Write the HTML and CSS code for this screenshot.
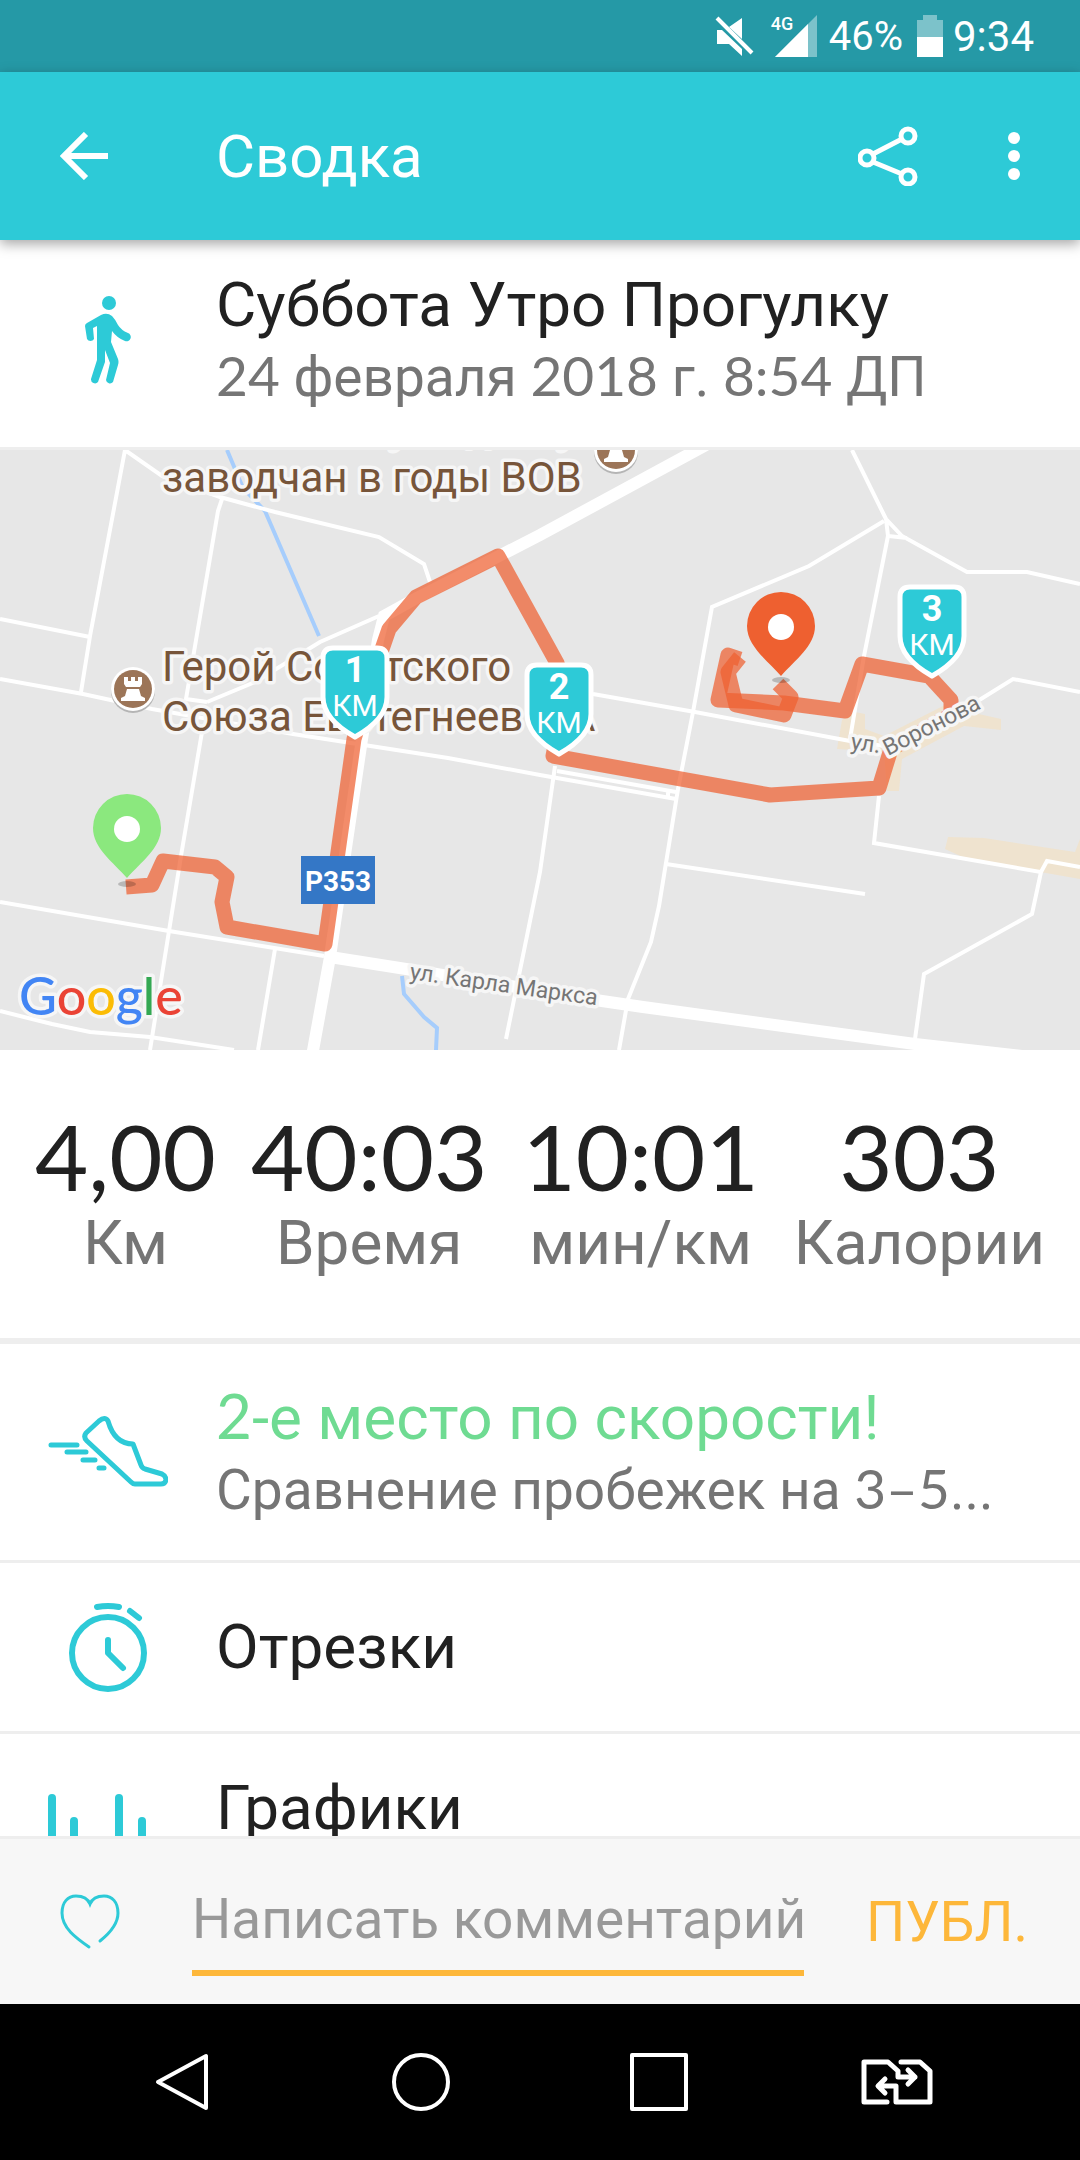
FILE: index.html
```html
<!DOCTYPE html>
<html lang="ru">
<head>
    <meta charset="UTF-8">
    <meta name="viewport" content="width=device-width, initial-scale=1.0">
    <title>Сводка</title>
    <link rel="stylesheet" href="styles.css">
</head>
<body>
    <!-- Системная строка -->
    <div class="status">
        <svg width="40" height="40" viewBox="0 0 40 40">
            <path d="M27 2v21L14 11zM2 14h5l20 19v7L14 28H2z" fill="#fff"/>
            <path d="M2 2l35 35" stroke="#fff" stroke-width="4"/>
        </svg>
        <div class="signal">
            <span>4G</span>
            <svg width="42" height="42" viewBox="0 0 42 42">
                <path d="M42 0v42H0z" fill="#7cc2ca"/>
                <path d="M33 9v33H0z" fill="#fff"/>
            </svg>
        </div>
        <span class="percent">46%</span>
        <svg width="26" height="42" viewBox="0 0 26 42">
            <path d="M6 0h14v5h6v17H0V5h6z" fill="#7cc2ca"/>
            <path d="M0 22h26v20H0z" fill="#fff"/>
        </svg>
        <span class="time">9:34</span>
    </div>

    <header class="appbar">
        <button class="back" aria-label="Назад">
            <svg width="48" height="48" viewBox="0 0 48 48" fill="none" stroke="#fff" stroke-width="6">
                <path d="M48 24H5M26 2L4 24l22 22"/>
            </svg>
        </button>
        <h1>Сводка</h1>
        <button aria-label="Поделиться">
            <svg width="60" height="60" viewBox="0 0 60 60" fill="none" stroke="#fff" stroke-width="5">
                <circle cx="9" cy="32" r="7"/>
                <circle cx="50" cy="10" r="7"/>
                <circle cx="50" cy="51" r="7"/>
                <path d="M15 28l29-15M15 36l29 12"/>
            </svg>
        </button>
        <button aria-label="Ещё">
            <svg width="12" height="60" viewBox="0 0 12 60" fill="#fff">
                <circle cx="6" cy="12" r="6"/>
                <circle cx="6" cy="30" r="6"/>
                <circle cx="6" cy="48" r="6"/>
            </svg>
        </button>
    </header>

    <main>
        <section class="row activity">
            <div class="icon">
                <svg width="46" height="90" viewBox="0 0 46 90" fill="#2dcad7">
                    <circle cx="24" cy="7" r="7"/>
                    <path d="M16 19Q22 16 27 20Q30 23 33 29Q36 34 43 37A4 4 0 0 1 40 45Q32 42 27 35L26 46L33 63Q34 66 33 69L28 86A4 4 0 0 1 21 84L25 67L20 54V66L13 86A4 4 0 0 1 6 83L12 64V30L8 32L9 43A4 4 0 0 1 2 43L0 30Q0 28 2 27Z"/>
                </svg>
            </div>
            <div class="text">
                <h2>Суббота Утро Прогулку</h2>
                <p><span class="num">24</span> февраля <span class="num">2018</span> г. <span class="num">8:54</span> ДП</p>
            </div>
        </section>

        <!-- Карта маршрута -->
        <svg class="map" viewBox="0 0 1080 600" preserveAspectRatio="xMidYMid slice" role="img" aria-label="Карта">
            <defs>
                <g id="shield">
                    <path d="M-22-92H22Q32-92 32-82V-43Q32-21 0-3Q-32-21-32-43V-82Q-32-92-22-92Z" fill="#2dcad7" stroke="#fff" stroke-width="5"/>
                </g>
                <g id="drop">
                    <path d="M0 0C-14-16-34-30-34-50A33 33 0 0 1 34-50C34-30 14-16 0 0Z"/>
                    <circle cy="-49" r="13" fill="#fff"/>
                </g>
                <g id="tower">
                    <circle cy="2" r="22" fill="#b5b5b5"/>
                    <circle r="22" fill="#fff"/>
                    <circle r="19" fill="#9c7558"/>
                    <path d="M-9-12h4v4h3v-4h4v4h3v-4h4v7l-2 3H-7l-2-3zM-6 0H6L8 7l4 2v3H-12V9l4-2z" fill="#fff"/>
                </g>
            </defs>

            <rect width="1080" height="600" fill="#e7e7e7"/>
            <g fill="#efe3cf">
                <path d="M948 387L984 388L1075 402L1080 389V429L967 409L945 399Z"/>
                <path d="M855 262L865 264V279L884 286L943 256L1001 269V280L964 276L902 309L899 341H887L884 302L837 299L842 270Z"/>
            </g>
            <g class="river">
                <path d="M227 0L243 38L265 61L319 186"/>
                <path d="M402 526L404 544L424 567L437 578L436 600"/>
            </g>
            <g class="street">
                <path d="M81 242L90 186L125 0L162 26L220 47L275 62L379 87L424 114L430 132"/>
                <path d="M222 49L218 61L186 249L207 252"/>
                <path d="M203 276L181 406L169 481L150 600"/>
                <path d="M0 169L90 187M0 229L83 244L152 259L293 284L448 308L540 325L676 349"/>
                <path d="M207 252L255 232L320 192L379 166"/>
                <path d="M0 452L169 481L324 506M0 561L52 574L90 582L150 587L234 600"/>
                <path d="M275 499L258 600M555 316L540 422L506 589"/>
                <path d="M884 71L809 116L712 157L693 262L678 339L659 456L651 492L628 549L619 600"/>
                <path d="M852 0L886 69L902 86L967 122H1027L1080 134M886 69L888 86L907 88"/>
                <path d="M888 86L864 206L850 289M593 244L695 262L850 291L884 296"/>
                <path d="M960 260L981 249L1013 229L1080 242"/>
                <path d="M557 321L676 342M668 340V348M666 414L865 444"/>
                <path d="M879 346L874 393L1041 422L1032 464L924 524L915 589M1041 422L1047 411L1080 417"/>
            </g>
            <g class="street main">
                <path d="M706-5L540 85L499 106L413 150L384 166L378 190L362 289L330 507L312 606"/>
                <path d="M330 507L406 519L602 551L643 557L915 594L1022 606"/>
            </g>
            <g class="route">
                <path d="M126 437L152 435L163 411L215 417L227 427L222 452L227 477L325 494L354 289L380 205L389 179L416 147L498 106L557 213L566 240L553 306L770 345L879 338L891 299L951 265V250L929 226L862 214L845 261L784 253L718 250L728 205L740 209"/>
                <path d="M740 207L728 222L736 255L784 265L791 247L778 234"/>
            </g>

            <g class="place">
                <text x="389" y="-9">у</text>
                <text x="466" y="-9">д</text>
                <text x="557" y="-9">у</text>
                <text x="162" y="42">заводчан в годы ВОВ</text>
                <text x="162" y="231">Герой Советского</text>
                <text x="162" y="281">Союза Евстегнеев</text>
                <text x="568" y="281">А</text>
            </g>
            <use href="#tower" x="133" y="239"/>
            <use href="#tower" x="616"/>
            <g class="road-name">
                <text transform="translate(409 529) rotate(8)">ул. Карла Маркса</text>
                <text transform="translate(850 299) rotate(8)">ул.</text>
                <text transform="translate(888 306) rotate(-27)">Воронова</text>
            </g>
            <rect x="301" y="406" width="74" height="48" fill="#3477c6"/>
            <text class="road-sign" x="338" y="441">Р353</text>

            <ellipse cx="127" cy="434" rx="9" ry="3" fill="#000" opacity=".2"/>
            <ellipse cx="781" cy="230" rx="9" ry="3" fill="#000" opacity=".2"/>
            <use href="#drop" x="127" y="428" fill="#8be87e"/>
            <use href="#drop" x="781" y="226" fill="#ee6030"/>

            <g class="km" transform="translate(355 290)">
                <use href="#shield"/>
                <text class="km-num" y="-58">1</text>
                <text y="-24">КМ</text>
            </g>
            <g class="km" transform="translate(559 307)">
                <use href="#shield"/>
                <text class="km-num" y="-58">2</text>
                <text y="-24">КМ</text>
            </g>
            <g class="km" transform="translate(932 229)">
                <use href="#shield"/>
                <text class="km-num" y="-58">3</text>
                <text y="-24">КМ</text>
            </g>

            <text class="google" x="19" y="565"><tspan fill="#4285f4">G</tspan><tspan fill="#ea4335">o</tspan><tspan fill="#fbbc05">o</tspan><tspan fill="#4285f4">g</tspan><tspan fill="#34a853">l</tspan><tspan fill="#ea4335">e</tspan></text>
        </svg>

        <section class="stats">
            <div class="stat"><strong>4,00</strong><span>Км</span></div>
            <div class="stat"><strong>40:03</strong><span>Время</span></div>
            <div class="stat"><strong>10:01</strong><span>мин/км</span></div>
            <div class="stat"><strong>303</strong><span>Калории</span></div>
        </section>

        <section class="row place-row">
            <div class="icon">
                <svg width="120" height="72" viewBox="0 0 120 72" fill="none" stroke="#2dcad7" stroke-width="5" stroke-linecap="round" stroke-linejoin="round">
                    <path d="M51 5Q57 0 60 5C64 19 71 28 85 28L93 49Q94 52 97 53L114 58Q118 60 118 64Q117 68 113 68H87Q85 68 83 66L39 25Q35 21 38 17Z"/>
                    <path d="M3 29H29M19 36H38M35 44H47M51 52H56"/>
                </svg>
            </div>
            <div class="text">
                <h2 class="green"><span class="num">2</span>-е место по скорости!</h2>
                <p>Сравнение пробежек на <span class="num">3–5</span>...</p>
            </div>
        </section>
        <section class="row">
            <div class="icon">
                <svg width="80" height="92" viewBox="0 0 80 92" fill="none" stroke="#2dcad7" stroke-width="6" stroke-linecap="round" stroke-linejoin="round">
                    <circle cx="40" cy="52" r="36"/>
                    <path d="M29 6Q40 4 51 6M62 10L71 17M40 39V52L55 67"/>
                </svg>
            </div>
            <div class="text"><h2>Отрезки</h2></div>
        </section>
        <section class="row charts">
            <div class="icon">
                <svg width="120" height="100" viewBox="0 0 120 100" stroke="#2dcad7" stroke-width="8" stroke-linecap="round">
                    <path d="M4 30V96M26 53V96M49 80V96M71 30V96M94 53V96M116 80V96"/>
                </svg>
            </div>
            <div class="text"><h2>Графики</h2></div>
        </section>
    </main>

    <form class="comment">
        <button type="button" aria-label="Нравится">
            <svg width="60" height="56" viewBox="0 0 60 56" fill="none" stroke="#2dcad7" stroke-width="3" stroke-linecap="round">
                <path d="M29 53C16 44 2 34 2 19C2 8 8 2 16 2C23 2 28 5 30 10C32 5 37 2 44 2C52 2 58 8 58 19C58 30 50 39 40 47"/>
            </svg>
        </button>
        <input type="text" placeholder="Написать комментарий" aria-label="Комментарий">
        <button type="submit" class="publish">ПУБЛ.</button>
    </form>

    <nav class="navbar">
        <button aria-label="Назад">
            <svg width="60" height="60" viewBox="0 0 60 60"><path d="M53 4V56L5 30Z"/></svg>
        </button>
        <button aria-label="Домой">
            <svg width="60" height="60" viewBox="0 0 60 60"><circle cx="30" cy="30" r="27"/></svg>
        </button>
        <button aria-label="Недавние">
            <svg width="60" height="60" viewBox="0 0 60 60"><rect x="3" y="3" width="54" height="54"/></svg>
        </button>
        <button aria-label="Сменить SIM">
            <svg class="sim" width="72" height="46" viewBox="0 0 72 46">
                <path d="M26 43H3V3H27L37 12V18H54M47 11L54 18L47 25"/>
                <path d="M40 3H59L69 12V43H35V27H18M24 20L17 27L24 34"/>
            </svg>
        </button>
    </nav>
</body>
</html>
```
FILE: styles.css
```css
* {
    box-sizing: border-box;
}

body {
    margin: 0;
    height: 100vh;
    display: flex;
    flex-direction: column;
    background: #fff;
    color: #212121;
    font-family: Roboto, "Liberation Sans", sans-serif;
}

h1, h2, p {
    margin: 0;
    font-weight: 400;
}

button {
    padding: 0;
    border: none;
    background: none;
    font-family: inherit;
    cursor: pointer;
}

svg {
    display: block;
    flex-shrink: 0;
}

.num {
    font-family: Lato, sans-serif;
}

.status {
    height: 72px;
    flex-shrink: 0;
    display: flex;
    align-items: center;
    justify-content: flex-end;
    padding-right: 46px;
    background: #2599a6;
    color: #fff;
}

.signal {
    position: relative;
    margin: 0 12px 0 20px;
}

.signal span {
    position: absolute;
    top: 0;
    left: -4px;
    font-size: 18px;
    line-height: 18px;
    font-weight: 500;
}

.percent {
    margin-right: 14px;
    font-size: 40px;
}

.time {
    margin-left: 10px;
    font-size: 42px;
}

.appbar {
    position: relative;
    height: 168px;
    flex-shrink: 0;
    display: flex;
    align-items: center;
    gap: 90px;
    padding: 0 60px;
    background: #2dcad7;
    color: #fff;
    box-shadow: 0 4px 12px rgba(0, 0, 0, 0.35);
}

.appbar h1 {
    flex: 1;
    margin-left: 18px;
    font-size: 60px;
}

main {
    flex: 1;
    min-height: 0;
    overflow: hidden;
}

.row {
    display: flex;
    align-items: center;
    min-height: 171px;
    border-bottom: 3px solid #eee;
}

.row .icon {
    width: 216px;
    flex-shrink: 0;
    display: flex;
    justify-content: center;
}

.row h2 {
    font-size: 62px;
    line-height: 70px;
}

.row p {
    font-size: 55px;
    line-height: 70px;
    color: #757575;
}

.row .green {
    color: #6fdb92;
}

.activity {
    padding: 30px 0 35px;
}

.map {
    width: 100%;
    height: 600px;
    overflow: hidden;
}

.map .street {
    fill: none;
    stroke: #fff;
    stroke-width: 4;
}

.map .main {
    stroke-width: 12;
}

.map .river {
    fill: none;
    stroke: #a6cdfc;
    stroke-width: 4;
}

.map .route path {
    fill: none;
    stroke: #ee5f31;
    stroke-width: 15;
    stroke-linejoin: round;
    opacity: 0.72;
}

.place text,
.road-name text,
.google {
    paint-order: stroke;
    stroke: #f6f6f6;
    stroke-width: 7;
    stroke-linejoin: round;
}

.place {
    fill: #77553a;
    font-size: 42px;
}

.road-name {
    fill: #757575;
    font-size: 23px;
}

.road-sign {
    fill: #fff;
    font-size: 28px;
    font-weight: 700;
    text-anchor: middle;
}

.km {
    fill: #fff;
    font-size: 30px;
    text-anchor: middle;
}

.km-num {
    font-size: 36px;
    font-weight: 700;
}

.google {
    font-family: Lato, sans-serif;
    font-size: 52px;
    font-weight: 500;
}

.stats {
    display: flex;
    justify-content: space-evenly;
    padding: 61px 0 59px;
    border-bottom: 6px solid #eee;
}

.stat {
    display: flex;
    flex-direction: column;
    align-items: center;
    gap: 6px;
}

.stat strong {
    font-family: Lato, sans-serif;
    font-size: 92px;
    line-height: 90px;
    font-weight: 400;
}

.stat span {
    font-size: 62px;
    line-height: 72px;
    color: #757575;
}

.place-row {
    min-height: 219px;
}

.charts {
    align-items: flex-start;
    padding-top: 34px;
}

.charts .text {
    padding-top: 5px;
}

.comment {
    height: 168px;
    flex-shrink: 0;
    display: flex;
    align-items: center;
    padding: 0 52px 0 60px;
    border-top: 3px solid #eee;
    background: #f7f7f7;
}

.comment input {
    flex: 1;
    min-width: 0;
    height: 109px;
    margin: 0 62px 0 72px;
    padding: 0;
    border: none;
    border-bottom: 6px solid #fdb73a;
    border-radius: 0;
    outline: none;
    background: none;
    font-family: inherit;
    font-size: 55px;
}

.comment input::placeholder {
    color: #999;
    opacity: 1;
}

.publish {
    color: #fdb73a;
    font-size: 55px;
}

.navbar {
    height: 156px;
    flex-shrink: 0;
    display: flex;
    padding: 0 64px;
    background: #000;
}

.navbar button {
    flex: 1;
    display: flex;
    align-items: center;
    justify-content: center;
}

.navbar svg {
    fill: none;
    stroke: #fff;
    stroke-width: 4;
    stroke-linejoin: round;
}

.navbar .sim {
    stroke-width: 5;
    stroke-linecap: round;
}
```
